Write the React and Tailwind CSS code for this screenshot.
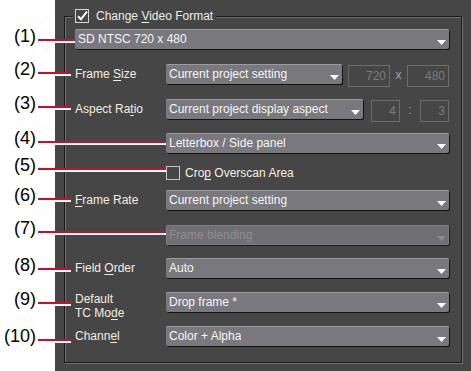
import React from "react";

function Arrow({ disabled }) {
  return (
    <svg width="9" height="5" viewBox="0 0 9 5" className="mt-[6px] mr-[3px] shrink-0">
      <path d="M0 0H9L4.5 5Z" fill={disabled ? "#8c8b8f" : "#ffffff"} />
    </svg>
  );
}

function Dropdown({ w, text, disabled }) {
  return (
    <div
      className={`flex h-[20px] ${w} shrink-0 items-center justify-between rounded-[2px] pl-[3px] ${
        disabled
          ? "bg-[#706f73] text-[#8f8e92] shadow-[inset_0_0_0_1px_#7f7e82,1px_1px_0_#1c1c1c]"
          : "bg-[#79787c] text-[#f6f6f6] shadow-[inset_0_1px_0_#9b9a9e,1px_1px_0_#121212]"
      }`}
    >
      <span className="truncate">{text}</span>
      <Arrow disabled={disabled} />
    </div>
  );
}

function NumBox({ w, v }) {
  return (
    <div className={`mt-[1px] flex h-[22px] ${w} shrink-0 items-center justify-end border border-[#6c6c6c] pr-[3px] text-[#7c7c7c]`}>
      {v}
    </div>
  );
}

function Label({ children }) {
  return (
    <div className="flex h-[20px] w-[91px] shrink-0 items-center text-[#f3efe0]">
      <span>{children}</span>
    </div>
  );
}

const U = ({ children }) => <span className="underline underline-offset-2">{children}</span>;

function Callout({ top, n, w }) {
  return (
    <div className={`absolute left-0 ${top} flex h-[20px] items-center`}>
      <div className="mb-[10px] w-[36px] text-right text-[18px] leading-none text-black">{n}</div>
      <div className={`ml-[2px] flex ${w} flex-col`}>
        <div className="h-[2px] bg-[#c8102e]" />
        <div className="h-[2px] bg-white" />
      </div>
    </div>
  );
}

export default function App() {
  return (
    <div className="relative flex h-[371px] w-[471px] bg-white font-['Liberation_Sans',Arial,sans-serif] text-[12px]">
      <div className="w-[55px] shrink-0" />
      <div className="h-full flex-1 bg-[#464646] pl-[9px] pt-[16px]">
        <div className="relative h-[347px] w-[398px] border border-[#1c1c1c] shadow-[1px_1px_0_#6f6f6f,inset_1px_1px_0_#6f6f6f]">
          <div className="absolute left-[8px] top-[-9px] flex h-[16px] items-center bg-[#464646] px-[2px] pr-[3px] text-[#ececec]">
            <div className="flex h-[14px] w-[14px] items-center justify-center border border-[#d6d6d6]">
              <svg width="12" height="12" viewBox="0 0 12 12">
                <path d="M2 6.2L5 9.2L11 1.5" fill="none" stroke="#ffffff" strokeWidth="2" />
              </svg>
            </div>
            <span className="ml-[7px]">
              Change <U>V</U>ideo Format
            </span>
          </div>

          <div className="flex flex-col pl-[10px] pr-[12px] pt-[12px]">
            <div className="flex h-[20px]">
              <Dropdown w="w-full" text="SD NTSC 720 x 480" />
            </div>

            <div className="mt-[15px] flex h-[20px] items-start">
              <Label>
                Frame <U>S</U>ize
              </Label>
              <Dropdown w="w-[176px]" text="Current project setting" />
              <div className="ml-[6px]" />
              <NumBox w="w-[42px]" v="720" />
              <div className="flex h-[22px] w-[17px] items-center justify-center text-[#9aa0a8]">x</div>
              <NumBox w="w-[42px]" v="480" />
            </div>

            <div className="mt-[15px] flex h-[20px] items-start">
              <Label>
                Aspect Ra<U>t</U>io
              </Label>
              <Dropdown w="w-[197px]" text="Current project display aspect" />
              <div className="ml-[8px]" />
              <NumBox w="w-[29px]" v="4" />
              <div className="flex h-[22px] w-[20px] items-center justify-center text-[#9aa0a8]">:</div>
              <NumBox w="w-[29px]" v="3" />
            </div>

            <div className="mt-[14px] flex h-[20px]">
              <div className="w-[91px] shrink-0" />
              <Dropdown w="flex-1" text="Letterbox / Side panel" />
            </div>

            <div className="mt-[13px] flex h-[14px] items-center">
              <div className="w-[91px] shrink-0" />
              <div className="h-[14px] w-[14px] border border-[#c8c8c8]" />
              <span className="ml-[5px] text-[#f3efe0]">
                Cro<U>p</U> Overscan Area
              </span>
            </div>

            <div className="mt-[10px] flex h-[20px]">
              <Label>
                <U>F</U>rame Rate
              </Label>
              <Dropdown w="flex-1" text="Current project setting" />
            </div>

            <div className="mt-[15px] flex h-[20px]">
              <div className="w-[91px] shrink-0" />
              <Dropdown w="flex-1" text="Frame blending" disabled />
            </div>

            <div className="mt-[13px] flex h-[20px]">
              <Label>
                Field <U>O</U>rder
              </Label>
              <Dropdown w="flex-1" text="Auto" />
            </div>

            <div className="mt-[14px] flex h-[20px]">
              <div className="w-[91px] shrink-0 leading-[14px] text-[#f3efe0]">
                Default
                <br />
                TC Mo<U>d</U>e
              </div>
              <Dropdown w="flex-1" text="Drop frame *" />
            </div>

            <div className="mt-[14px] flex h-[20px]">
              <Label>
                Chann<U>e</U>l
              </Label>
              <Dropdown w="flex-1" text="Color + Alpha" />
            </div>
          </div>
        </div>
      </div>

      <div className="pointer-events-none absolute inset-0">
        <Callout top="top-[31px]" n="(1)" w="w-[37px]" />
        <Callout top="top-[64px]" n="(2)" w="w-[33px]" />
        <Callout top="top-[98px]" n="(3)" w="w-[33px]" />
        <Callout top="top-[133px]" n="(4)" w="w-[128px]" />
        <Callout top="top-[160px]" n="(5)" w="w-[128px]" />
        <Callout top="top-[190px]" n="(6)" w="w-[33px]" />
        <Callout top="top-[223px]" n="(7)" w="w-[128px]" />
        <Callout top="top-[260px]" n="(8)" w="w-[33px]" />
        <Callout top="top-[294px]" n="(9)" w="w-[33px]" />
        <Callout top="top-[331px]" n="(10)" w="w-[33px]" />
      </div>
    </div>
  );
}
